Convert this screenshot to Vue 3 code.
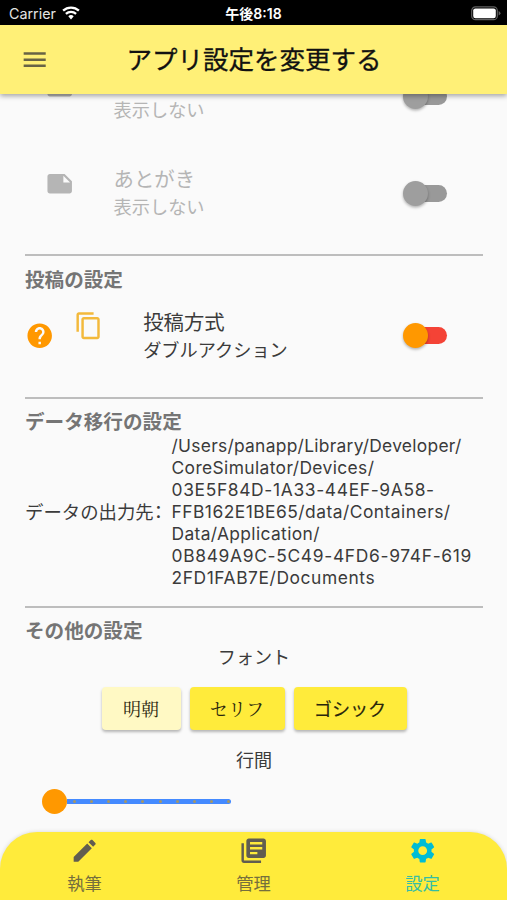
<script setup>
const icons = {
  menu: 'M3 18h18v-2H3v2zm0-5h18v-2H3v2zm0-7v2h18V6H3z',
  note: 'M22 10l-6-6H4c-1.1 0-2 .9-2 2v12.01c0 1.1.9 1.99 2 1.99l16-.01c1.1 0 2-.89 2-2v-8zm-7-4.5l5.5 5.5H15V5.5z',
  help: 'M12 2C6.48 2 2 6.48 2 12s4.48 10 10 10 10-4.48 10-10S17.52 2 12 2zm1 17h-2v-2h2v2zm2.07-7.75l-.9.92C13.45 12.9 13 13.5 13 15h-2v-.5c0-1.1.45-2.1 1.17-2.83l1.24-1.26c.37-.36.59-.86.59-1.41 0-1.1-.9-2-2-2s-2 .9-2 2H8c0-2.21 1.79-4 4-4s4 1.79 4 4c0 .88-.36 1.68-.93 2.25z',
  copy: 'M16 1H4c-1.1 0-2 .9-2 2v14h2V3h12V1zm3 4H8c-1.1 0-2 .9-2 2v14c0 1.1.9 2 2 2h11c1.1 0 2-.9 2-2V7c0-1.1-.9-2-2-2zm0 16H8V7h11v14z',
}
const hiddenRows = [
  { title: '', sub: '表示しない' },
  { title: 'あとがき', sub: '表示しない' },
]
const pathLines = [
  { text: '/Users/panapp/Library/Developer/', tracking: 0.28 },
  { text: 'CoreSimulator/Devices/', tracking: 0.38 },
  { text: '03E5F84D-1A33-44EF-9A58-', tracking: 0.66 },
  { text: 'FFB162E1BE65/data/Containers/', tracking: 0.48 },
  { text: 'Data/Application/', tracking: 0.36 },
  { text: '0B849A9C-5C49-4FD6-974F-619', tracking: 0.68 },
  { text: '2FD1FAB7E/Documents', tracking: 0.58 },
]
const tabs = [
  { label: '執筆', d: 'M3 17.25V21h3.75L17.81 9.94l-3.75-3.75L3 17.25zM20.71 7.04c.39-.39.39-1.02 0-1.41l-2.34-2.34c-.39-.39-1.02-.39-1.41 0l-1.83 1.83 3.75 3.75 1.83-1.83z' },
  { label: '管理', d: 'M4 6H2v14c0 1.1.9 2 2 2h14v-2H4V6zm16-4H8c-1.1 0-2 .9-2 2v12c0 1.1.9 2 2 2h12c1.1 0 2-.9 2-2V4c0-1.1-.9-2-2-2zm-1 9H9V9h10v2zm-4 4H9v-2h6v2zm4-8H9V5h10v2z' },
  { label: '設定', active: true, d: 'M19.14 12.94c.04-.3.06-.61.06-.94 0-.32-.02-.64-.07-.94l2.03-1.58c.18-.14.23-.41.12-.61l-1.92-3.32c-.12-.22-.37-.29-.59-.22l-2.39.96c-.5-.38-1.03-.7-1.62-.94l-.36-2.54c-.04-.24-.24-.41-.48-.41h-3.84c-.24 0-.43.17-.47.41l-.36 2.54c-.59.24-1.13.57-1.62.94l-2.39-.96c-.22-.08-.47 0-.59.22L2.74 8.87c-.12.21-.08.47.12.61l2.03 1.58c-.05.3-.09.63-.09.94s.02.64.07.94l-2.03 1.58c-.18.14-.23.41-.12.61l1.92 3.32c.12.22.37.29.59.22l2.39-.96c.5.38 1.03.7 1.62.94l.36 2.54c.05.24.24.41.48.41h3.84c.24 0 .44-.17.47-.41l.36-2.54c.59-.24 1.13-.56 1.62-.94l2.39.96c.22.08.47 0 .59-.22l1.92-3.32c.12-.22.07-.47-.12-.61l-2.01-1.58zM12 15.6c-1.98 0-3.6-1.62-3.6-3.6s1.62-3.6 3.6-3.6 3.6 1.62 3.6 3.6-1.62 3.6-3.6 3.6z' },
]
</script>

<template>
  <div class="app">
    <div class="status">
      <div class="carrier">
        <span>Carrier</span>
        <svg class="wifi" viewBox="0 0 18 14">
          <path d="M9 13.4l2.7-3.2a4 4 0 0 0-5.4 0z" fill="#fff" />
          <path d="M3.9 7.8a7.6 7.6 0 0 1 10.2 0M1.1 4.7a11.6 11.6 0 0 1 15.8 0" fill="none" stroke="#fff" stroke-width="2.3" />
        </svg>
      </div>
      <div class="clock">午後8:18</div>
      <div class="power">
        <svg class="battery" viewBox="0 0 30 15">
          <rect x="0.7" y="0.9" width="25.6" height="12.8" rx="3.8" fill="none" stroke="#606060" stroke-width="1.2" />
          <rect x="2.2" y="2.4" width="22.6" height="9.8" rx="2.2" fill="#fff" />
          <path d="M27.6 5v4.6q1.9-.8 1.9-2.3T27.6 5z" fill="#606060" />
        </svg>
      </div>
    </div>

    <header class="bar">
      <svg class="icon" viewBox="0 0 24 24"><path :d="icons.menu" /></svg>
      <h1>アプリ設定を変更する</h1>
    </header>

    <main class="main">
      <div class="scroll">
        <div v-for="(row, index) in hiddenRows" :key="index" class="row off">
          <svg class="icon" viewBox="0 0 24 24"><path :d="icons.note" /></svg>
          <div class="texts">
            <div class="title">{{ row.title }}</div>
            <div class="sub">{{ row.sub }}</div>
          </div>
          <div class="switch"><span class="thumb"></span></div>
        </div>

        <section class="post">
          <h2>投稿の設定</h2>
          <div class="row on">
            <svg class="icon help" viewBox="0 0 24 24"><path :d="icons.help" /></svg>
            <svg class="icon copy" viewBox="0 0 24 24"><path :d="icons.copy" /></svg>
            <div class="texts">
              <div class="title">投稿方式</div>
              <div class="sub">ダブルアクション</div>
            </div>
            <div class="switch"><span class="thumb"></span></div>
          </div>
        </section>

        <section class="data">
          <h2>データ移行の設定</h2>
          <div class="output">
            <div class="label">データの出力先<span class="colon">：</span></div>
            <div class="path">
              <div v-for="line in pathLines" :key="line.text" :style="{ letterSpacing: line.tracking + 'px' }">{{ line.text }}</div>
            </div>
          </div>
        </section>

        <section class="other">
          <h2>その他の設定</h2>
          <div class="caption first">フォント</div>
          <div class="fonts">
            <button class="mincho">明朝</button>
            <button class="serif">セリフ</button>
            <button class="gothic">ゴシック</button>
          </div>
          <div class="caption">行間</div>
          <div class="slider">
            <span class="knob"></span>
            <div class="track"><i v-for="n in 10" :key="n"></i></div>
          </div>
        </section>
      </div>
    </main>

    <nav class="nav">
      <div v-for="tab in tabs" :key="tab.label" class="tab" :class="{ active: tab.active }">
        <svg class="icon" viewBox="0 0 24 24"><path :d="tab.d" /></svg>
        <span>{{ tab.label }}</span>
      </div>
    </nav>
  </div>
</template>

<style>
body { margin: 0; background: #fafafa; }
</style>

<style scoped>
.app {
  width: 507px; height: 900px; display: flex; flex-direction: column; overflow: hidden;
  background: #fafafa; color: #3b3b3b; font-family: Inter, "Noto Sans CJK JP", sans-serif;
}
.icon { width: 29.4px; height: 29.4px; flex: none; fill: currentColor; display: block; }
h1, h2 { margin: 0; }
.status {
  height: 25px; flex: none; background: #000; color: #fff; display: grid;
  grid-template-columns: 1fr auto 1fr; align-items: center; font-size: 14.3px; line-height: 23px;
}
.carrier { display: flex; align-items: center; gap: 6px; padding: 1px 0 0 9px; color: #e4e4e4; }
.wifi { width: 18px; height: 14px; }
.clock { font-weight: 600; font-size: 14px; padding-top: 1px; }
.power { display: flex; justify-content: flex-end; padding-right: 6px; padding-top: 1px; }
.battery { width: 30px; height: 15px; }
.bar {
  height: 69px; flex: none; background: #fff077; display: grid; grid-template-columns: 60px 1fr 60px;
  align-items: center; box-shadow: 0 2px 5px rgba(0, 0, 0, 0.35); z-index: 1; color: #686344;
}
.bar .icon { margin-left: 20px; }
.bar h1 {
  font-size: 25.5px; font-weight: 400; line-height: 36px; color: #111; text-align: center;
  white-space: nowrap; padding: 1px 0 0 1px; -webkit-text-stroke: 0.3px #111;
}
.main { flex: 1; min-height: 0; overflow: hidden; }
.scroll { margin-top: -45px; padding: 0 24px 0 25px; }
.row { display: flex; box-sizing: border-box; }
.row .texts { flex: 1; }
.title { font-size: 20.4px; line-height: 28px; height: 28px; }
.sub { font-size: 18.2px; line-height: 26px; }
.off { height: 96.5px; padding: 23px 36px 0 20px; color: #b5b5b5; }
.off .texts { margin: -3px 0 0 39.2px; }
.switch {
  width: 41px; height: 17px; margin-top: 16px; margin-left: auto; border-radius: 9px;
  background: #999; position: relative; flex: none;
}
.thumb {
  position: absolute; left: -3.5px; top: -4px; width: 25px; height: 25px; border-radius: 50%;
  background: #9e9e9e; box-shadow: 0 1.5px 3px rgba(0, 0, 0, 0.3);
}
section { border-top: 2px solid #bdbdbd; }
h2 { font-size: 19.6px; line-height: 24px; font-weight: 700; color: #757575; }
.post { height: 143px; margin-top: 12px; padding-top: 12px; box-sizing: border-box; }
.on { padding: 17px 36px 0 0; }
.on .help { color: #ff9800; margin-top: 12px; }
.on .copy { color: #f3b93b; margin: 2px 0 0 20px; }
.on .texts { margin-left: 39.4px; }
.on .switch { background: #f44336; margin-top: 18px; }
.on .thumb { background: #ff9800; }
.data { height: 209px; box-sizing: border-box; padding-top: 11px; }
.output { display: flex; align-items: center; margin-top: 1px; }
.label { width: 146.5px; flex: none; font-size: 18.4px; line-height: 26px; white-space: nowrap; }
.colon { font-feature-settings: "halt"; }
.path { font-size: 17.4px; line-height: 22px; white-space: nowrap; }
.other { padding-top: 11px; }
.caption { text-align: center; font-size: 18.1px; line-height: 26px; }
.caption.first { margin-top: 1px; }
.fonts { display: flex; justify-content: center; gap: 9px; padding: 16.5px 0; }
.fonts button {
  height: 43.5px; border: 0; padding: 0; border-radius: 4px; background: #ffeb3b; color: #29260c;
  font-size: 18.1px; box-shadow: 0 2px 3px rgba(0, 0, 0, 0.28);
}
.fonts .mincho { width: 79px; background: #fff9c4; font-family: "Noto Serif CJK JP", serif; }
.fonts .serif { width: 95px; font-family: "Noto Serif CJK JP", serif; }
.fonts .gothic { width: 113px; font-family: "Noto Sans CJK JP", sans-serif; -webkit-text-stroke: 0.15px #29260c; }
.slider { display: flex; align-items: center; padding: 16.5px 0 0 17px; }
.knob { width: 25px; height: 25px; border-radius: 50%; background: #ff9800; }
.track {
  width: 164px; height: 5px; border-radius: 0 3px 3px 0; background: #448aff; display: flex; align-items: center;
  justify-content: space-between; padding: 0 1px 0 6px; box-sizing: border-box;
}
.track i { width: 3px; height: 3px; border-radius: 50%; background: #a79765; }
.nav {
  height: 68.5px; flex: none; background: #ffeb3b; border-radius: 37px 37px 0 0; display: flex;
  box-shadow: 0 0 4px rgba(0, 0, 0, 0.15); color: #615d50;
}
.tab { flex: 1; display: flex; flex-direction: column; align-items: center; padding-top: 4px; }
.tab span { font-size: 17.3px; line-height: 24px; margin-top: 7px; color: #756f3d; }
.tab.active { color: #00bcd4; }
.tab.active span { color: #35bda5; }
</style>
